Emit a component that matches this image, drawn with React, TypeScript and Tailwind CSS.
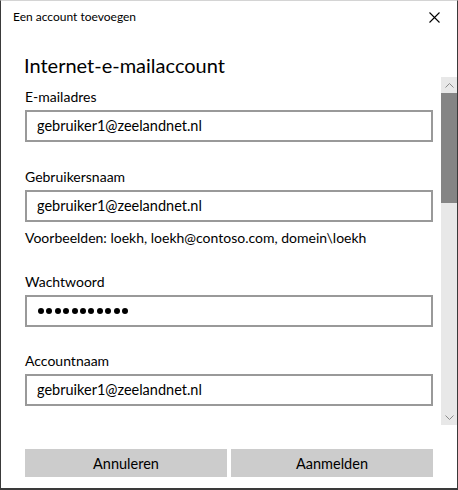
const font = { fontFamily: '"Segoe UI", Lato, "Noto Sans", sans-serif' };

function Field({ label, children }: { label: string; children: React.ReactNode }) {
  return (
    <div className="flex flex-col">
      <div className="h-[20px] text-[14px] leading-[20px] text-black">{label}</div>
      <div className="mt-[3px] h-[32px] border-2 border-[#999999] bg-white flex items-center pl-[10px] text-[14.5px] text-black">
        {children}
      </div>
    </div>
  );
}

function Scrollbar() {
  return (
    <div className="w-[16px] h-full bg-[#e8e8e8] flex flex-col shrink-0">
      <div className="h-[16px] flex items-center justify-center">
        <svg width="9" height="5" viewBox="0 0 9 5">
          <path d="M0.5 4.5 L4.5 0.5 L8.5 4.5" fill="none" stroke="#8a8a8a" strokeWidth="1" />
        </svg>
      </div>
      <div className="h-[110px] bg-[#858585]" />
      <div className="flex-1" />
      <div className="h-[16px] flex items-center justify-center">
        <svg width="9" height="5" viewBox="0 0 9 5">
          <path d="M0.5 0.5 L4.5 4.5 L8.5 0.5" fill="none" stroke="#8a8a8a" strokeWidth="1" />
        </svg>
      </div>
    </div>
  );
}

export default function App() {
  const dots = Array.from({ length: 11 });
  return (
    <div
      style={font}
      className="w-[458px] h-[490px] bg-white flex flex-col border-t border-t-[#d4d4d4] border-x border-x-[#3a3a3a] border-b-2 border-b-[#3a3a3a] overflow-hidden"
    >
      {/* titelbalk */}
      <div className="h-[32px] shrink-0 flex items-center justify-between pl-[12px] pr-[17px]">
        <span className="text-[12px] text-black">Een account toevoegen</span>
        <svg width="11" height="11" viewBox="0 0 11 11">
          <path d="M0.5 0.5 L10.5 10.5 M10.5 0.5 L0.5 10.5" stroke="#000" strokeWidth="1.1" />
        </svg>
      </div>

      <div className="h-[44px] shrink-0 flex items-end pl-[23px]">
        <h1 className="text-[20px] leading-[24px] text-black">Internet-e-mailaccount</h1>
      </div>

      {/* formulier */}
      <div className="h-[348px] shrink-0 flex">
        <div className="flex-1 pl-[24px] pr-[8px] pt-[10px] overflow-hidden">
          <Field label="E-mailadres">gebruiker1@zeelandnet.nl</Field>
          <div className="mt-[25px]">
            <Field label="Gebruikersnaam">gebruiker1@zeelandnet.nl</Field>
          </div>
          <div className="mt-[6px] h-[20px] text-[14px] leading-[20px] text-black">
            Voorbeelden: loekh, loekh@contoso.com, domein\loekh
          </div>
          <div className="mt-[24px]">
            <Field label="Wachtwoord">
              <div className="flex gap-[2.4px] pl-[1px]">
                {dots.map((_, i) => (
                  <div key={i} className="w-[6px] h-[6px] rounded-full bg-black" />
                ))}
              </div>
            </Field>
          </div>
          <div className="mt-[24px]">
            <Field label="Accountnaam">gebruiker1@zeelandnet.nl</Field>
          </div>
        </div>
        <Scrollbar />
      </div>

      {/* knoppen */}
      <div className="flex gap-[4px] pl-[24px] pr-[24px] pt-[24px]">
        <button className="flex-1 h-[28px] pt-[1px] bg-[#cccccc] text-[14.5px] text-black">Annuleren</button>
        <button className="flex-1 h-[28px] pt-[1px] bg-[#cccccc] text-[14.5px] text-black">Aanmelden</button>
      </div>
    </div>
  );
}
